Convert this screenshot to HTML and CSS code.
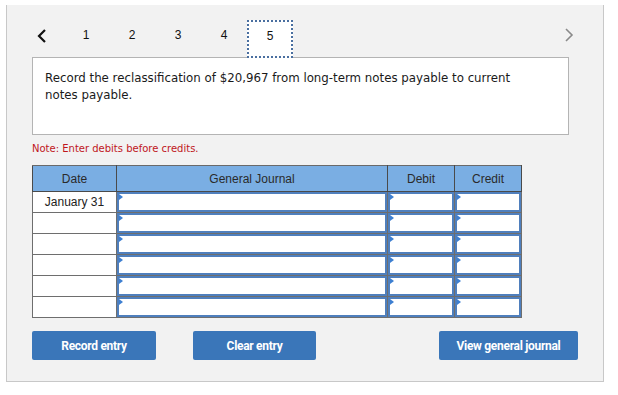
FILE: index.html
```html
<!DOCTYPE html>
<html>
<head>
<meta charset="utf-8">
<link rel="stylesheet" href="styles.css">
</head>
<body>
<div class="panel">
  <div class="nav">
    <span class="prev"><svg width="10" height="14" viewBox="0 0 10 14"><path d="M8 1 L2 7 L8 13" fill="none" stroke="#111" stroke-width="2.2"/></svg></span>
    <span class="tab">1</span>
    <span class="tab">2</span>
    <span class="tab">3</span>
    <span class="tab">4</span>
    <span class="tab active">5</span>
    <span class="spacer"></span>
    <span class="next"><svg width="10" height="14" viewBox="0 0 10 14"><path d="M2 1 L8 7 L2 13" fill="none" stroke="#8a8a8a" stroke-width="1.6"/></svg></span>
  </div>
  <div class="question">Record the reclassification of $20,967 from long-term notes payable to current notes payable.</div>
  <div class="note">Note: Enter debits before credits.</div>
  <table class="journal">
    <thead>
      <tr><th class="c-date">Date</th><th class="c-gj">General Journal</th><th class="c-num">Debit</th><th class="c-num">Credit</th></tr>
    </thead>
    <tbody>
      <tr><td class="date">January 31</td><td class="in"><div class="box"></div></td><td class="in"><div class="box"></div></td><td class="in"><div class="box"></div></td></tr>
      <tr><td class="date"></td><td class="in"><div class="box"></div></td><td class="in"><div class="box"></div></td><td class="in"><div class="box"></div></td></tr>
      <tr><td class="date"></td><td class="in"><div class="box"></div></td><td class="in"><div class="box"></div></td><td class="in"><div class="box"></div></td></tr>
      <tr><td class="date"></td><td class="in"><div class="box"></div></td><td class="in"><div class="box"></div></td><td class="in"><div class="box"></div></td></tr>
      <tr><td class="date"></td><td class="in"><div class="box"></div></td><td class="in"><div class="box"></div></td><td class="in"><div class="box"></div></td></tr>
      <tr><td class="date"></td><td class="in"><div class="box"></div></td><td class="in"><div class="box"></div></td><td class="in"><div class="box"></div></td></tr>
    </tbody>
  </table>
  <div class="actions">
    <button class="btn b-record">Record entry</button>
    <button class="btn b-clear">Clear entry</button>
    <span class="spacer"></span>
    <button class="btn b-view">View general journal</button>
  </div>
</div>
</body>
</html>
```
FILE: styles.css
```css
html, body {
  margin: 0;
  padding: 0;
  background: #ffffff;
}
body {
  padding-top: 5px;
  padding-left: 6px;
}
.panel {
  width: 598px;
  height: 377px;
  box-sizing: border-box;
  background: #f2f2f2;
  border: 1px solid #c8c8c8;
  border-top: none;
  padding-top: 15px;
}
.nav {
  display: flex;
  align-items: stretch;
  height: 38px;
  padding-left: 27px;
  font-family: "Liberation Sans", Arial, sans-serif;
  font-size: 12px;
  color: #111;
}
.prev {
  width: 16px;
  margin-right: 13px;
  display: flex;
  align-items: center;
  justify-content: center;
  padding-bottom: 7px;
}
.tab {
  width: 46px;
  display: flex;
  align-items: center;
  justify-content: center;
  box-sizing: border-box;
  padding-bottom: 8px;
}
.tab.active {
  background: #fff;
  border: 2px dotted #4a6fa0;
  padding-bottom: 6px;
  position: relative;
  z-index: 1;
}
.spacer { flex: 1; }
.next {
  width: 16px;
  margin-right: 26px;
  display: flex;
  align-items: center;
  justify-content: center;
  padding-bottom: 9px;
}
.question {
  margin-left: 25px;
  margin-top: -1px;
  box-sizing: content-box;
  background: #fff;
  border: 1px solid #b4b4b4;
  font-family: "DejaVu Sans", Verdana, sans-serif;
  font-size: 11.8px;
  line-height: 17px;
  color: #1a1a1a;
  width: 476px;
  padding: 12px 47px 0 12px;
  height: 64px;
}
.note {
  margin-left: 25px;
  margin-top: 7px;
  font-family: "DejaVu Sans", Verdana, sans-serif;
  font-size: 10px;
  color: #c0161c;
  line-height: 14px;
}
.journal {
  margin-left: 25px;
  margin-top: 9px;
  border-collapse: collapse;
  font-family: "Liberation Sans", Arial, sans-serif;
  font-size: 12px;
  color: #222;
}
.journal th {
  background: #7aaee3;
  border: 1px solid #4a4a4a;
  border-top-color: #6a6a6a;
  font-weight: normal;
  height: 25px;
  padding: 0;
  color: #2a2a2a;
}
.c-date { width: 83px; }
.c-gj { width: 270px; }
.c-num { width: 66px; }
.journal td {
  border: 1px solid #6e6e6e;
  height: 20px;
  padding: 0;
  background: #fff;
}
.journal td.date {
  text-align: center;
}
.journal td.in {
  position: relative;
}
.box {
  height: 20px;
  box-sizing: border-box;
  border: 2px solid #4f7fbd;
  position: relative;
}
.box::before {
  content: "";
  position: absolute;
  left: 0;
  top: 0;
  width: 0;
  height: 0;
  border-top: 3px solid transparent;
  border-bottom: 3px solid transparent;
  border-left: 4px solid #3d7fd1;
}
.actions {
  display: flex;
  margin-top: 13px;
  padding-left: 25px;
  padding-right: 25px;
}
.btn {
  height: 29px;
  background: #3a76b9;
  color: #fff;
  border: none;
  border-radius: 2px;
  font-family: Roboto, "Liberation Sans", sans-serif;
  font-weight: 700;
  font-size: 12px;
  letter-spacing: -0.3px;
  padding: 0;
}
.b-record { width: 124px; }
.b-clear { width: 123px; margin-left: 37px; }
.b-view { width: 139px; }
```
